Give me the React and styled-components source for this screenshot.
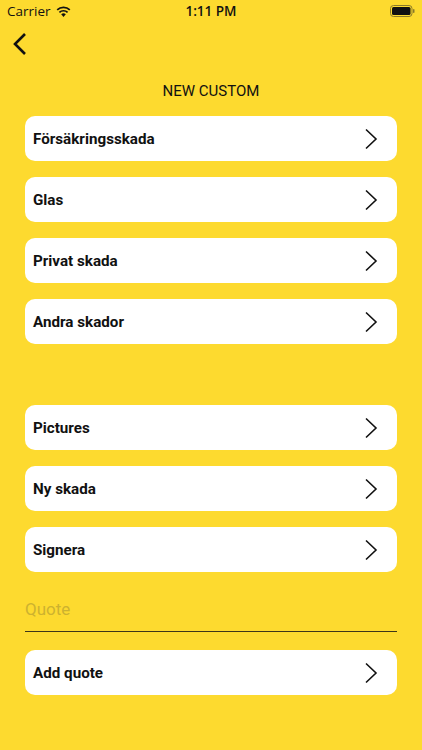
import React from "react";
import styled, { createGlobalStyle } from "styled-components";

const GlobalStyle = createGlobalStyle`
  html, body {
    margin: 0;
    padding: 0;
    background: #fdda2f;
  }
  body {
    font-family: Roboto, "Liberation Sans", sans-serif;
  }
`;

const Screen = styled.div`
  width: 422px;
  height: 750px;
  background: #fdda2f;
  display: flex;
  flex-direction: column;
  overflow: hidden;
`;

const StatusBar = styled.div`
  height: 22px;
  display: grid;
  grid-template-columns: 1fr auto 1fr;
  align-items: center;
  padding: 0 7px;
  font-size: 13.5px;
  color: #111;
`;

const Carrier = styled.div`
  display: flex;
  align-items: center;
  gap: 5px;
  font-family: "Open Sans", "Liberation Sans", sans-serif;
`;

const Time = styled.div`
  font-weight: 600;
  font-family: "Open Sans", "Liberation Sans", sans-serif;
`;

const Battery = styled.div`
  justify-self: end;
  display: flex;
  align-items: center;
`;

const NavBar = styled.div`
  height: 44px;
  display: flex;
  align-items: center;
  padding-left: 12px;
`;

const Title = styled.h1`
  margin: 16px 0 0;
  font-size: 15px;
  font-weight: 400;
  text-align: center;
  color: #111;
  line-height: 18px;
`;

const List = styled.div`
  display: flex;
  flex-direction: column;
  gap: 16px;
  padding: 0 25px;
  margin-top: ${(p) => p.$top}px;
`;

const Card = styled.div`
  height: 45px;
  background: #fff;
  border-radius: 10px;
  display: flex;
  align-items: center;
  justify-content: space-between;
  padding: 0 19px 0 8px;
  font-size: 15.2px;
  font-weight: 700;
  color: #111;
`;

const QuoteField = styled.div`
  margin: 27px 25px 0;
  height: 32px;
  border-bottom: 1.6px solid #3d3518;
  font-size: 17px;
  color: #cdb22f;
  line-height: 20px;
`;

const Chevron = () => (
  <svg width="14" height="22" viewBox="0 0 14 22" fill="none">
    <path d="M2 1.5 L12 11 L2 20.5" stroke="#111" strokeWidth="1.6" />
  </svg>
);

const BackIcon = () => (
  <svg width="16" height="24" viewBox="0 0 16 24" fill="none">
    <path d="M13 2 L3 12 L13 22" stroke="#111" strokeWidth="2.6" />
  </svg>
);

const Wifi = () => (
  <svg width="15" height="11" viewBox="0 0 15 11">
    <path d="M7.5 11 L5.2 8.3 A3.4 3.4 0 0 1 9.8 8.3 Z" fill="#111" />
    <path d="M3.4 6.4 A5.9 5.9 0 0 1 11.6 6.4" stroke="#111" strokeWidth="1.7" fill="none" />
    <path d="M1.2 3.9 A9 9 0 0 1 13.8 3.9" stroke="#111" strokeWidth="1.7" fill="none" />
  </svg>
);

const BatteryIcon = () => (
  <svg width="25" height="12" viewBox="0 0 25 12">
    <rect x="0.5" y="0.5" width="21.5" height="11" rx="3" fill="none" stroke="#8a7a2a" />
    <rect x="2" y="2" width="18.5" height="8" rx="1.5" fill="#111" />
    <rect x="23" y="4" width="1.5" height="4" rx="0.7" fill="#8a7a2a" />
  </svg>
);

const groupOne = ["Försäkringsskada", "Glas", "Privat skada", "Andra skador"];
const groupTwo = ["Pictures", "Ny skada", "Signera"];

const Row = ({ label }) => (
  <Card>
    <span>{label}</span>
    <Chevron />
  </Card>
);

export default function App() {
  return (
    <>
      <GlobalStyle />
      <Screen>
        <StatusBar>
          <Carrier>
            Carrier <Wifi />
          </Carrier>
          <Time>1:11 PM</Time>
          <Battery>
            <BatteryIcon />
          </Battery>
        </StatusBar>
        <NavBar>
          <BackIcon />
        </NavBar>
        <Title>NEW CUSTOM</Title>
        <List $top={16}>
          {groupOne.map((item) => (
            <Row key={item} label={item} />
          ))}
        </List>
        <List $top={61}>
          {groupTwo.map((item) => (
            <Row key={item} label={item} />
          ))}
        </List>
        <QuoteField>Quote</QuoteField>
        <List $top={18}>
          <Row label="Add quote" />
        </List>
      </Screen>
    </>
  );
}
